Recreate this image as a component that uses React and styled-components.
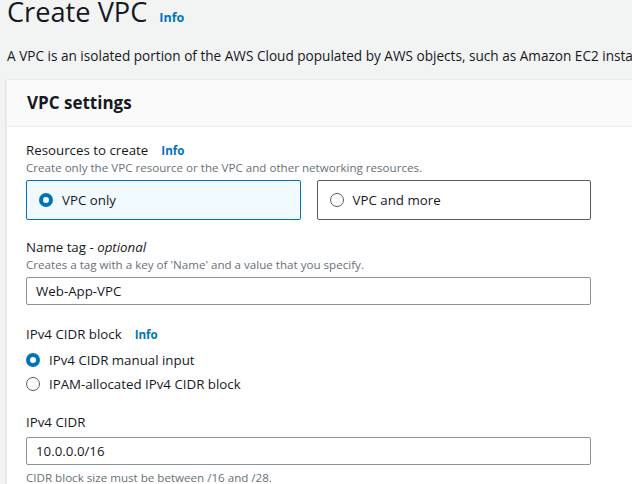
import React, { useState } from "react";
import styled, { createGlobalStyle } from "styled-components";

const GlobalStyle = createGlobalStyle`
  html, body {
    margin: 0;
    padding: 0;
    background: #f2f3f3;
    overflow: hidden;
  }
  body {
    font-family: "Open Sans", "Noto Sans", sans-serif;
    color: #16191f;
  }
`;

const App = () => {
  const [resource, setResource] = useState("vpc");
  const [cidrMode, setCidrMode] = useState("manual");
  const [name, setName] = useState("Web-App-VPC");
  const [cidr, setCidr] = useState("10.0.0.0/16");

  return (
    <Page>
      <GlobalStyle />
      <TitleRow>
        <Title>Create VPC</Title>
        <InfoLink>Info</InfoLink>
      </TitleRow>
      <Intro>
        A VPC is an isolated portion of the AWS Cloud populated by AWS objects,
        such as Amazon EC2 instances.
      </Intro>

      <Panel>
        <PanelHeader>VPC settings</PanelHeader>
        <PanelBody>
          <Field>
            <LabelRow>
              <Label>Resources to create</Label>
              <InfoLink small>Info</InfoLink>
            </LabelRow>
            <Hint>
              Create only the VPC resource or the VPC and other networking
              resources.
            </Hint>
            <Tiles>
              <Tile
                selected={resource === "vpc"}
                onClick={() => setResource("vpc")}
              >
                <Radio checked={resource === "vpc"} />
                VPC only
              </Tile>
              <Tile
                selected={resource === "more"}
                onClick={() => setResource("more")}
              >
                <Radio checked={resource === "more"} />
                VPC and more
              </Tile>
            </Tiles>
          </Field>

          <Field>
            <Label>
              Name tag - <em>optional</em>
            </Label>
            <Hint>Creates a tag with a key of 'Name' and a value that you specify.</Hint>
            <Input value={name} onChange={(e) => setName(e.target.value)} />
          </Field>

          <Field offset={2}>
            <LabelRow>
              <Label>IPv4 CIDR block</Label>
              <InfoLink small>Info</InfoLink>
            </LabelRow>
            <RadioList>
              <RadioOption onClick={() => setCidrMode("manual")}>
                <Radio checked={cidrMode === "manual"} />
                IPv4 CIDR manual input
              </RadioOption>
              <RadioOption onClick={() => setCidrMode("ipam")}>
                <Radio checked={cidrMode === "ipam"} />
                IPAM-allocated IPv4 CIDR block
              </RadioOption>
            </RadioList>
          </Field>

          <Field offset={1}>
            <Label spaced>IPv4 CIDR</Label>
            <Input value={cidr} onChange={(e) => setCidr(e.target.value)} />
            <Hint after>CIDR block size must be between /16 and /28.</Hint>
          </Field>
        </PanelBody>
      </Panel>
    </Page>
  );
};

const Page = styled.div`
  padding: 0 0 0 6px;
  width: 760px;
`;

const TitleRow = styled.div`
  display: flex;
  align-items: baseline;
  gap: 12px;
  margin-top: -4px;
  padding-left: 1px;
`;

const Title = styled.h1`
  margin: 0;
  font-size: 27.2px;
  font-weight: 400;
  line-height: 32px;
  color: #16191f;
`;

const InfoLink = styled.span`
  color: #0073bb;
  font-weight: 700;
  font-size: ${(p) => (p.small ? "11.6px" : "12.5px")};
  cursor: pointer;
`;

const Intro = styled.p`
  margin: 18px 0 0 1px;
  font-size: 13.6px;
  line-height: 20px;
  white-space: nowrap;
`;

const Panel = styled.section`
  margin-top: 13px;
  background: #fff;
  border: 1px solid #eaeded;
  box-shadow: 0 1px 1px rgba(0, 28, 36, 0.3);
`;

const PanelHeader = styled.h2`
  margin: 0;
  padding: 12px 20px;
  background: #fafafa;
  border-bottom: 1px solid #eaeded;
  font-size: 17px;
  font-weight: 700;
  line-height: 22px;
`;

const PanelBody = styled.div`
  padding: 13px 19px;
  width: 565px;
  display: flex;
  flex-direction: column;
  gap: 17px;
`;

const Field = styled.div`
  display: flex;
  flex-direction: column;
  margin-top: ${(p) => p.offset || 0}px;
`;

const LabelRow = styled.div`
  display: flex;
  align-items: baseline;
  gap: 13px;
`;

const Label = styled.div`
  font-size: 13.3px;
  line-height: 20px;
  color: #16191f;
  margin-bottom: ${(p) => (p.spaced ? "5px" : "0")};

  em {
    font-style: italic;
  }
`;

const Hint = styled.div`
  font-size: 11.6px;
  line-height: 16px;
  color: #687078;
  margin-top: ${(p) => (p.after ? "5px" : "0")};
  margin-bottom: ${(p) => (p.after ? "0" : "4px")};
`;

const Tiles = styled.div`
  display: grid;
  grid-template-columns: 1fr 1fr;
  gap: 16px;
`;

const Tile = styled.div`
  display: flex;
  align-items: center;
  gap: 9px;
  height: 40px;
  box-sizing: border-box;
  padding: 0 12px;
  font-size: 13.3px;
  border: 1px solid ${(p) => (p.selected ? "#0073bb" : "#545b64")};
  background: ${(p) => (p.selected ? "#f1faff" : "#fff")};
  border-radius: 2px;
  cursor: pointer;
`;

const Radio = styled.span`
  width: 14px;
  height: 14px;
  box-sizing: border-box;
  border-radius: 50%;
  flex-shrink: 0;
  background: #fff;
  border: ${(p) => (p.checked ? "4px solid #0073bb" : "1.5px solid #545b64")};
`;

const RadioList = styled.div`
  display: flex;
  flex-direction: column;
  gap: 4px;
  margin-top: 6px;
`;

const RadioOption = styled.div`
  display: flex;
  align-items: center;
  gap: 9px;
  font-size: 13.3px;
  line-height: 20px;
  cursor: pointer;
`;

const Input = styled.input`
  height: 28px;
  box-sizing: border-box;
  padding: 0 9px;
  border: 1px solid #879596;
  border-radius: 2px;
  font-family: "Open Sans", "Noto Sans", sans-serif;
  font-size: 13.3px;
  color: #16191f;
  outline: none;
`;

export default App;
